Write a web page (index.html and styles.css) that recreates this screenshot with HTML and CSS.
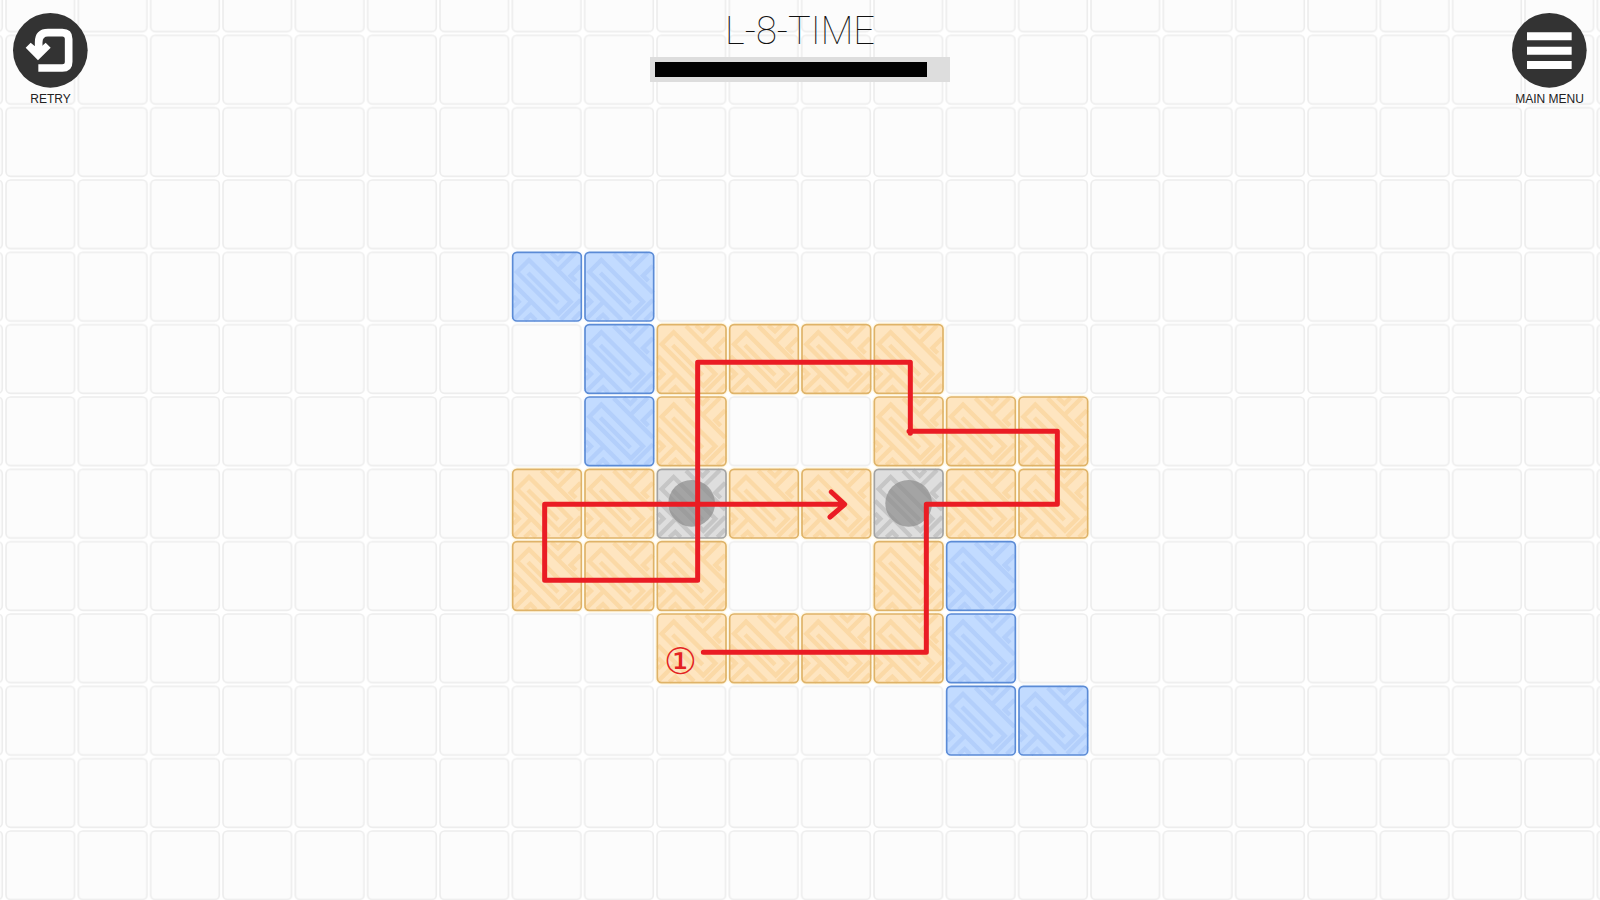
FILE: index.html
```
<!DOCTYPE html>
<html lang="en">
<head>
<meta charset="utf-8">
<meta name="viewport" content="width=device-width, initial-scale=1">
<title>L-8-TIME</title>
<link rel="stylesheet" href="styles.css">
</head>
<body>
<main class="game">
  <svg class="board" viewBox="0 0 4800 2700" preserveAspectRatio="xMidYMid slice" role="img" aria-label="Puzzle board with solution path">
    <defs>
      <pattern id="cells" x="12" y="100" width="217" height="217" patternUnits="userSpaceOnUse">
        <rect class="cell" x="6" y="6" width="206" height="206" rx="14"/>
      </pattern>
      <g id="maze">
        <path d="M88 6L206 124M138 56L190 4M118 4L138 22L156 4M206 42L176 72L192 88"/>
        <path d="M138 154L48 64M15 61L51 25L176 150L140 186Z"/>
        <path d="M4 96L112 204M56 152L4 204M4 134L20 150L4 166M38 206L56 190L72 206M206 144L146 204M206 182L182 206"/>
      </g>
      <g id="a">
        <rect class="halo halo-sand" x="-5" y="-5" width="220" height="220" rx="22"/>
        <rect class="sand" x="2" y="2" width="206" height="206" rx="13"/>
        <use href="#maze" class="maze-sand"/>
        <rect class="edge-sand" x="2" y="2" width="206" height="206" rx="13"/>
      </g>
      <g id="b">
        <rect class="halo halo-blue" x="-5" y="-5" width="220" height="220" rx="22"/>
        <rect class="blue" x="2" y="2" width="206" height="206" rx="13"/>
        <use href="#maze" class="maze-blue"/>
        <rect class="edge-blue" x="2" y="2" width="206" height="206" rx="13"/>
      </g>
      <g id="c">
        <rect class="halo halo-sand" x="-5" y="-5" width="220" height="220" rx="22"/>
        <rect class="stone" x="2" y="2" width="206" height="206" rx="13"/>
        <use href="#maze" class="maze-stone"/>
        <rect class="edge-stone" x="2" y="2" width="206" height="206" rx="13"/>
        <circle class="disc" cx="105" cy="104" r="70"/>
      </g>
    </defs>
    <rect width="4800" height="2700" fill="url(#cells)"/>
    <g transform="translate(1536 755)">
      <use href="#b" x="0" y="0"/><use href="#b" x="217" y="0"/>
      <use href="#b" x="217" y="217"/><use href="#a" x="434" y="217"/><use href="#a" x="651" y="217"/><use href="#a" x="868" y="217"/><use href="#a" x="1085" y="217"/>
      <use href="#b" x="217" y="434"/><use href="#a" x="434" y="434"/><use href="#a" x="1085" y="434"/><use href="#a" x="1302" y="434"/><use href="#a" x="1519" y="434"/>
      <use href="#a" x="0" y="651"/><use href="#a" x="217" y="651"/><use href="#c" x="434" y="651"/><use href="#a" x="651" y="651"/><use href="#a" x="868" y="651"/><use href="#c" x="1085" y="651"/><use href="#a" x="1302" y="651"/><use href="#a" x="1519" y="651"/>
      <use href="#a" x="0" y="868"/><use href="#a" x="217" y="868"/><use href="#a" x="434" y="868"/><use href="#a" x="1085" y="868"/><use href="#b" x="1302" y="868"/>
      <use href="#a" x="434" y="1085"/><use href="#a" x="651" y="1085"/><use href="#a" x="868" y="1085"/><use href="#a" x="1085" y="1085"/><use href="#b" x="1302" y="1085"/>
      <use href="#b" x="1302" y="1302"/><use href="#b" x="1519" y="1302"/>
    </g>
    <path class="route" d="M2110 1957H2779V1513H3172V1294H2731V1087H2093V1741H1634V1513H2532M2727 1294H2731V1300M2494 1476L2534 1513L2490 1551"/>
    <text class="step" x="2041" y="2022">①</text>
  </svg>

  <header class="hud">
    <button class="action" type="button">
      <svg class="icon" viewBox="0 0 225 225" aria-hidden="true">
        <circle class="icon-disc" cx="112" cy="112" r="112"/>
        <path class="icon-line" d="M76 165H148Q167 165 167 146V78Q167 59 148 59H105Q77 59 77 88V110"/>
        <path class="icon-fill" d="M38 104L53 89L65 99H87L98 89L113 104L75 142Z"/>
      </svg>
      RETRY
    </button>
    <div class="status">
      <h1 class="title" id="level">L-8-TIME</h1>
      <progress class="timer" aria-labelledby="level" max="290" value="272"></progress>
    </div>
    <button class="action" type="button">
      <svg class="icon" viewBox="0 0 225 225" aria-hidden="true">
        <circle class="icon-disc" cx="112" cy="112" r="112"/>
        <path class="icon-fill" d="M45 58H179V82H45ZM45 101H179V125H45ZM45 144H179V168H45Z"/>
      </svg>
      MAIN MENU
    </button>
  </header>
</main>
</body>
</html>
```
FILE: styles.css
```
* { box-sizing: border-box; }
body { margin: 0; background: #fff; color: #222; font-family: "Liberation Sans", Arial, sans-serif; }
.game { display: grid; height: 100vh; overflow: hidden; }
.board, .hud { grid-area: 1 / 1; }
.board { width: 100%; height: 100%; min-height: 0; }
.hud { display: flex; justify-content: space-between; align-items: flex-start; padding: 13px; z-index: 1; }

.action { display: flex; flex-direction: column; align-items: center; gap: 4px; width: 75px; padding: 0; border: 0; background: none; color: inherit; font: 12px/14px "Liberation Sans", Arial, sans-serif; white-space: nowrap; cursor: pointer; }
.icon { width: 75px; height: 75px; }
.icon-disc { fill: #333; }
.icon-line { fill: none; stroke: #fff; stroke-width: 23; }
.icon-fill { fill: #fff; }

.status { display: flex; flex-direction: column; align-items: center; gap: 8px; }
.title { margin: 0; font: 100 38px/36px Roboto, "Open Sans", sans-serif; color: #111; }
.timer { appearance: none; display: block; width: 300px; height: 25px; padding: 5px; border: 0; background: #ddd; }
.timer::-webkit-progress-bar { background: #ddd; }
.timer::-webkit-progress-value { background: #000; }

.cell { fill: #fcfcfc; stroke: #ededed; stroke-width: 5; }
.halo-sand { fill: #fff9e8; }
.halo-blue { fill: #f7fbff; }
.sand { fill: #fee5c0; }
.blue { fill: #c2dbff; }
.stone { fill: #dedede; }
.maze-sand, .maze-blue, .maze-stone { fill: none; stroke-width: 13; }
.maze-sand { stroke: #fbd9a6; }
.maze-blue { stroke: #b3cffb; }
.maze-stone { stroke: #c6c6c6; }
.edge-sand, .edge-blue, .edge-stone { fill: none; stroke-width: 5; }
.edge-sand { stroke: #dfb368; }
.edge-blue { stroke: #5b8bd6; }
.edge-stone { stroke: #a2a2a2; }
.disc { fill: #8c8c8c; fill-opacity: 0.7; }
.route { fill: none; stroke: #ea1c24; stroke-width: 15; stroke-linecap: round; stroke-linejoin: round; }
.step { fill: #e32222; font: 110px "DejaVu Sans", sans-serif; text-anchor: middle; }
```
